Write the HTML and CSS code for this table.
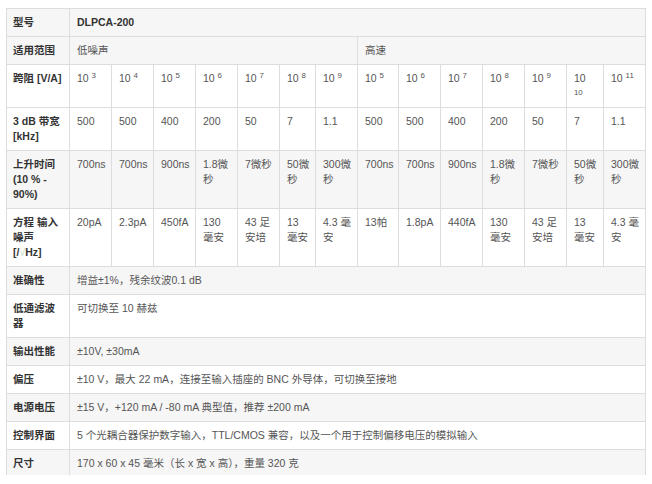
FILE: index.html
```html
<!DOCTYPE html>
<html lang="zh-CN">
<head>
<meta charset="utf-8">
<title>DLPCA-200</title>
<link rel="stylesheet" href="styles.css">
</head>
<body>
<div class="frame">
<table class="spec">
  <colgroup>
    <col class="c-label">
    <col class="c42"><col class="c42"><col class="c42"><col class="c42"><col class="c42"><col class="c36"><col class="c42">
    <col class="c41"><col class="c42"><col class="c42"><col class="c42"><col class="c42"><col class="c37"><col class="c42">
  </colgroup>
  <tbody>
    <tr class="gray">
      <th>型号</th>
      <td colspan="14" class="strong">DLPCA-200</td>
    </tr>
    <tr class="gray">
      <th>适用范围</th>
      <td colspan="7">低噪声</td>
      <td colspan="7">高速</td>
    </tr>
    <tr>
      <th>跨阻 [V/A]</th>
      <td>10 <sup>3</sup></td><td>10 <sup>4</sup></td><td>10 <sup>5</sup></td><td>10 <sup>6</sup></td><td>10 <sup>7</sup></td><td>10 <sup>8</sup></td><td>10 <sup>9</sup></td>
      <td>10 <sup>5</sup></td><td>10 <sup>6</sup></td><td>10 <sup>7</sup></td><td>10 <sup>8</sup></td><td>10 <sup>9</sup></td><td>10<br><sup class="low">10</sup></td><td>10 <sup>11</sup></td>
    </tr>
    <tr>
      <th>3 dB 带宽 [kHz]</th>
      <td>500</td><td>500</td><td>400</td><td>200</td><td>50</td><td>7</td><td>1.1</td>
      <td>500</td><td>500</td><td>400</td><td>200</td><td>50</td><td>7</td><td>1.1</td>
    </tr>
    <tr class="gray">
      <th>上升时间 (10 % - 90%)</th>
      <td>700ns</td><td>700ns</td><td>900ns</td><td>1.8微秒</td><td>7微秒</td><td>50微秒</td><td>300微秒</td>
      <td>700ns</td><td>700ns</td><td>900ns</td><td>1.8微秒</td><td>7微秒</td><td>50微秒</td><td>300微秒</td>
    </tr>
    <tr>
      <th>方程 输入<br>噪声<br><span class="unit">[/<span class="root">√</span>Hz]</span></th>
      <td>20pA</td><td>2.3pA</td><td>450fA</td><td>130 毫安</td><td>43 足安培</td><td>13 毫安</td><td>4.3 毫安</td>
      <td>13帕</td><td>1.8pA</td><td>440fA</td><td>130 毫安</td><td>43 足安培</td><td>13 毫安</td><td>4.3 毫安</td>
    </tr>
    <tr class="gray">
      <th>准确性</th>
      <td colspan="14">增益±1%，残余纹波0.1 dB</td>
    </tr>
    <tr>
      <th>低通滤波器</th>
      <td colspan="14">可切换至 10 赫兹</td>
    </tr>
    <tr class="gray">
      <th>输出性能</th>
      <td colspan="14">±10V, ±30mA</td>
    </tr>
    <tr>
      <th>偏压</th>
      <td colspan="14">±10 V，最大 22 mA，连接至输入插座的 BNC 外导体，可切换至接地</td>
    </tr>
    <tr class="gray">
      <th>电源电压</th>
      <td colspan="14">±15 V，+120 mA / -80 mA 典型值，推荐 ±200 mA</td>
    </tr>
    <tr>
      <th>控制界面</th>
      <td colspan="14">5 个光耦合器保护数字输入，TTL/CMOS 兼容，以及一个用于控制偏移电压的模拟输入</td>
    </tr>
    <tr class="gray">
      <th>尺寸</th>
      <td colspan="14">170 x 60 x 45 毫米（长 x 宽 x 高），重量 320 克</td>
    </tr>
  </tbody>
</table>
</div>
</body>
</html>
```

FILE: styles.css
```css
html, body {
  margin: 0;
  padding: 0;
  background: #ffffff;
}

.frame {
  margin: 8px 0 0 6px;
  height: 467px;
  overflow: hidden;
}

.spec {
  border-collapse: collapse;
  table-layout: fixed;
  width: 639px;
  font-family: "Liberation Sans", Arial, "Noto Sans CJK SC", sans-serif;
  font-size: 10.5px;
  line-height: 15px;
  color: #555;
}

.c-label { width: 63px; }
.c42 { width: 42px; }
.c41 { width: 41px; }
.c37 { width: 37px; }
.c36 { width: 36px; }

.spec th,
.spec td {
  border: 1px solid #dddddd;
  padding: 6px 5px 6px 6px;
  vertical-align: top;
  text-align: left;
}

.spec th {
  font-weight: bold;
  color: #333;
  padding-left: 6px;
}

.spec td {
  padding-left: 7px;
}

.spec td.strong {
  font-weight: bold;
  color: #333;
}

.spec tr.gray th,
.spec tr.gray td {
  background: #f6f6f6;
}

.spec sup {
  font-size: 75%;
  line-height: 0;
  vertical-align: 0.45em;
}

.spec sup.low {
  vertical-align: 0.25em;
}

.unit {
  white-space: nowrap;
}

.root {
  color: #b9d6b9;
  font-weight: normal;
}
```
